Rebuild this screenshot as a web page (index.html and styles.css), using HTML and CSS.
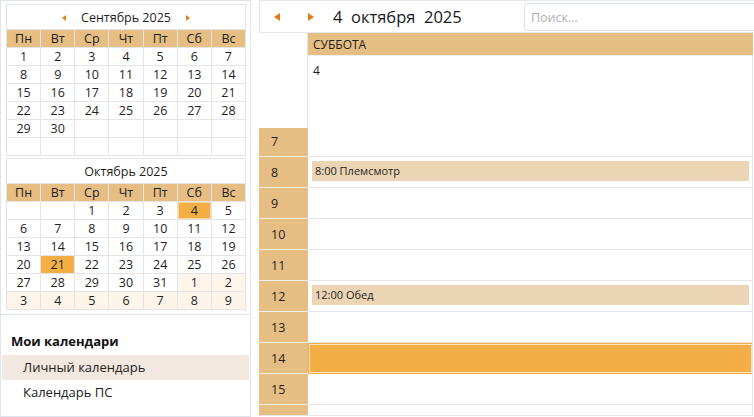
FILE: index.html
```html
<!DOCTYPE html>
<html lang="ru">
<head>
<meta charset="utf-8">
<title>Календарь</title>
<link rel="stylesheet" href="styles.css">
</head>
<body>
<div class="app">
  <aside class="sidebar">
    <div class="cals">
      <div class="month">
        <div class="month-title">
          <span class="tri tri-left small"></span>
          <span class="month-name">Сентябрь 2025</span>
          <span class="tri tri-right small"></span>
        </div>
        <div class="grid">
          <div class="hd">Пн</div><div class="hd">Вт</div><div class="hd">Ср</div><div class="hd">Чт</div><div class="hd">Пт</div><div class="hd">Сб</div><div class="hd">Вс</div>
          <div>1</div><div>2</div><div>3</div><div>4</div><div>5</div><div>6</div><div>7</div>
          <div>8</div><div>9</div><div>10</div><div>11</div><div>12</div><div>13</div><div>14</div>
          <div>15</div><div>16</div><div>17</div><div>18</div><div>19</div><div>20</div><div>21</div>
          <div>22</div><div>23</div><div>24</div><div>25</div><div>26</div><div>27</div><div>28</div>
          <div>29</div><div>30</div><div></div><div></div><div></div><div></div><div></div>
          <div></div><div></div><div></div><div></div><div></div><div></div><div></div>
        </div>
      </div>
      <div class="month">
        <div class="month-title">
          <span class="month-name">Октябрь 2025</span>
        </div>
        <div class="grid">
          <div class="hd">Пн</div><div class="hd">Вт</div><div class="hd">Ср</div><div class="hd">Чт</div><div class="hd">Пт</div><div class="hd">Сб</div><div class="hd">Вс</div>
          <div></div><div></div><div>1</div><div>2</div><div>3</div><div class="today">4</div><div>5</div>
          <div>6</div><div>7</div><div>8</div><div>9</div><div>10</div><div>11</div><div>12</div>
          <div>13</div><div>14</div><div>15</div><div>16</div><div>17</div><div>18</div><div>19</div>
          <div>20</div><div class="sel">21</div><div>22</div><div>23</div><div>24</div><div>25</div><div>26</div>
          <div>27</div><div>28</div><div>29</div><div>30</div><div>31</div><div class="next">1</div><div class="next">2</div>
          <div class="next">3</div><div class="next">4</div><div class="next">5</div><div class="next">6</div><div class="next">7</div><div class="next">8</div><div class="next">9</div>
        </div>
      </div>
    </div>
    <div class="mycals">
      <div class="mycals-title">Мои календари</div>
      <div class="cal-item active">Личный календарь</div>
      <div class="cal-item">Календарь ПС</div>
    </div>
  </aside>
  <main class="main">
    <div class="toolbar">
      <span class="tri tri-left big"></span>
      <span class="tri tri-right big"></span>
      <span class="date-title">4&nbsp; октября&nbsp; 2025</span>
      <input class="search" type="text" placeholder="Поиск...">
    </div>
    <div class="dayview">
      <div class="dv-head">
        <div class="dv-gut"></div>
        <div class="dv-dayname">СУББОТА</div>
      </div>
      <div class="dv-allday">
        <div class="dv-gut"></div>
        <div class="dv-allday-cell">4</div>
      </div>
      <div class="hours">
        <div class="hours-inner">
          <div class="hour"><div class="hlabel">7</div><div class="hcell"></div></div>
          <div class="hour"><div class="hlabel">8</div><div class="hcell"><div class="event">8:00 Племсмотр</div></div></div>
          <div class="hour"><div class="hlabel">9</div><div class="hcell"></div></div>
          <div class="hour"><div class="hlabel">10</div><div class="hcell"></div></div>
          <div class="hour"><div class="hlabel">11</div><div class="hcell"></div></div>
          <div class="hour"><div class="hlabel">12</div><div class="hcell"><div class="event">12:00 Обед</div></div></div>
          <div class="hour"><div class="hlabel">13</div><div class="hcell"></div></div>
          <div class="hour"><div class="hlabel">14</div><div class="hcell selected"></div></div>
          <div class="hour"><div class="hlabel">15</div><div class="hcell"></div></div>
          <div class="hour"><div class="hlabel"></div><div class="hcell"></div></div>
        </div>
      </div>
    </div>
  </main>
</div>
</body>
</html>
```
FILE: styles.css
```css
* { box-sizing: border-box; }
html, body { margin: 0; padding: 0; }
body {
  width: 754px;
  height: 417px;
  overflow: hidden;
  background: #fff;
  font-family: "Open Sans", "Noto Sans", sans-serif;
  color: #1e1e1e;
}
.app { display: flex; height: 417px; }

/* sidebar */
.sidebar {
  width: 251px;
  flex: 0 0 251px;
  height: 417px;
  border: 1px solid #dfe4ea;
  display: flex;
  flex-direction: column;
}
.cals {
  padding: 3px 4px 4px 5px;
  border-bottom: 1px solid #dfe4ea;
  display: flex;
  flex-direction: column;
  gap: 2px;
}
.month {
  width: 240px;
  border: 1px solid #e4e4e4;
}
.month-title {
  height: 24px;
  display: flex;
  align-items: center;
  justify-content: center;
  gap: 15px;
  font-size: 12.5px;
  padding-top: 1px;
}
.grid {
  display: grid;
  grid-template-columns: repeat(7, 1fr);
  gap: 1px;
  background: #e4e4e4;
  padding-top: 1px;
}
.grid > div {
  background: #fff;
  height: 17px;
  line-height: 17px;
  text-align: center;
  font-size: 12.5px;
}
.grid > .hd { background: #e6bd82; }
.grid > .next { background: #fdf5ea; }
.grid > .sel { background: #f3ae46; }
.grid > .today { background: #f3ae46; box-shadow: inset 0 0 0 1px #f9d49a; }

.tri { display: inline-block; width: 0; height: 0; border-style: solid; }
.tri.small.tri-left { border-width: 3.5px 4px 3.5px 0; border-color: transparent #e0801a transparent transparent; }
.tri.small.tri-right { border-width: 3.5px 0 3.5px 4px; border-color: transparent transparent transparent #e0801a; }
.tri.big.tri-left { border-width: 4.5px 6px 4.5px 0; border-color: transparent #e07a12 transparent transparent; }
.tri.big.tri-right { border-width: 4.5px 0 4.5px 6px; border-color: transparent transparent transparent #e07a12; }

.mycals { padding: 0 1px; }
.mycals-title {
  padding: 16px 0 4px 9px;
  height: 40px;
  line-height: 20px;
  font-size: 13px;
  font-weight: 700;
  color: #111;
}
.cal-item {
  height: 25px;
  line-height: 25px;
  padding-left: 21px;
  font-size: 13px;
  color: #222;
}
.cal-item.active { background: #f3e8df; }

/* main */
.main {
  flex: 1;
  padding-left: 8px;
  display: flex;
  flex-direction: column;
}
.toolbar {
  height: 33px;
  border: 1px solid #e3e7eb;
  border-right: none;
  display: flex;
  align-items: center;
  padding-left: 14px;
}
.toolbar .tri-right { margin-left: 28px; }
.date-title {
  margin-left: 19px;
  font-size: 16.5px;
  color: #1a1a1a;
}
.search {
  margin-left: auto;
  width: 230px;
  height: 28px;
  border: 1px solid #dde3ea;
  border-right: none;
  border-radius: 4px 0 0 4px;
  padding: 0 0 0 6px;
  font-family: "Open Sans", "Noto Sans", sans-serif;
  font-size: 12.5px;
  color: #333;
  outline: none;
  margin-top: 1px;
}
.search::placeholder { color: #b0b0b0; }

.dayview {
  width: 494px;
  height: 383px;
  border-right: 1px solid #e6e6e6;
  border-bottom: 1px solid #e6e6e6;
  display: flex;
  flex-direction: column;
}
.dv-head {
  display: flex;
  height: 23px;
}
.dv-gut {
  width: 49px;
  flex: 0 0 49px;
  border-right: 1px solid #e6e6e6;
}
.dv-dayname {
  flex: 1;
  background: #e6bd82;
  border-bottom: 1px solid #eee;
  font-size: 12px;
  line-height: 23px;
  padding-left: 5px;
  margin-right: -1px;
}
.dv-allday {
  display: flex;
  height: 72px;
}
.dv-allday-cell {
  flex: 1;
  font-size: 12px;
  padding: 6px 0 0 5px;
}
.hours {
  flex: 1;
  overflow: hidden;
}
.hours-inner { margin-top: -2px; }
.hour {
  display: flex;
  height: 31px;
}
.hlabel {
  width: 49px;
  flex: 0 0 49px;
  background: #e6bd82;
  border-bottom: 1px solid #efefef;
  font-size: 12.5px;
  line-height: 31px;
  padding-left: 12px;
}
.hcell {
  flex: 1;
  border-bottom: 1px solid #e6e6e6;
  padding: 4px 3px 0 4px;
}
.hcell.selected {
  background: #f3ae46;
  border: 1px solid #f3ae46;
  box-shadow: inset 0 0 0 1px #fbe3bf;
  margin-right: -1px;
}
.event {
  height: 20px;
  line-height: 20px;
  background: #ecd5b5;
  font-size: 11px;
  padding-left: 3px;
  color: #1e1e1e;
}
```
